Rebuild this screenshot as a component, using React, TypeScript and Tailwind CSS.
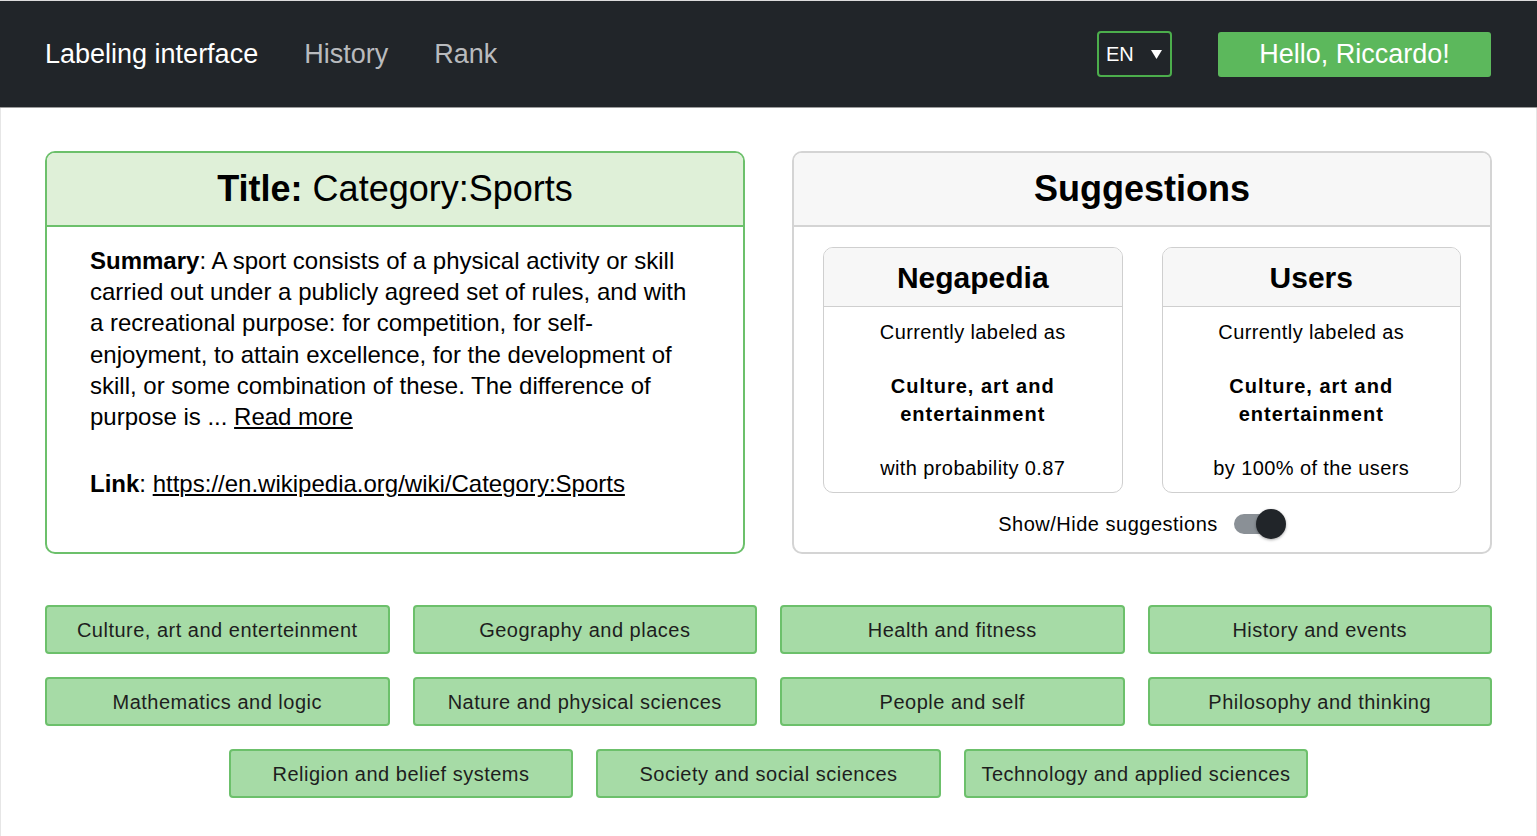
import { useState } from "react";

const CATEGORIES = [
  "Culture, art and enterteinment",
  "Geography and places",
  "Health and fitness",
  "History and events",
  "Mathematics and logic",
  "Nature and physical sciences",
  "People and self",
  "Philosophy and thinking",
  "Religion and belief systems",
  "Society and social sciences",
  "Technology and applied sciences",
];

const FONT = "font-['Liberation_Sans',Arial,sans-serif]";

function SourceCard({ name, footer }: { name: string; footer: string }) {
  return (
    <div className="flex-1 rounded-[10px] border border-[#cfcfcf] bg-white overflow-hidden">
      <div className="h-[59px] flex items-center justify-center bg-[#f7f7f7] border-b border-[#cfcfcf]">
        <h3 className="text-[30px] font-bold text-black">{name}</h3>
      </div>
      <div className="px-4 pt-[11px] pb-[10px] text-center text-[20px] leading-[28px] tracking-[0.4px] text-black">
        <p>Currently labeled as</p>
        <p className="mt-[26px] font-bold tracking-[1px]">
          Culture, art and
          <br />
          entertainment
        </p>
        <p className="mt-[26px]">{footer}</p>
      </div>
    </div>
  );
}

export default function App() {
  const [showSuggestions, setShowSuggestions] = useState(true);

  return (
    <div className={`min-h-screen bg-white border-t border-[#dcdcdc] ${FONT}`}>
      <nav className="h-[107px] bg-[#212529] border-b border-[#9c9c9c] flex items-center pl-[45px] pr-[46px]">
        <div className="flex items-center gap-[46px] text-[27px] pt-[1px]">
          <a href="#" className="text-white">Labeling interface</a>
          <a href="#" className="text-[#b9bbbe]">History</a>
          <a href="#" className="text-[#b9bbbe]">Rank</a>
        </div>
        <div className="ml-auto flex items-center gap-[46px]">
          <button className="w-[75px] h-[46px] rounded-[4px] border-2 border-[#4cae4c] flex items-center justify-between pl-[7px] pr-[8px] text-[20px] text-white">
            <span>EN</span>
            <svg width="11" height="9" viewBox="0 0 11 9">
              <polygon points="0,0 11,0 5.5,9" fill="white" />
            </svg>
          </button>
          <button className="w-[273px] h-[45px] rounded-[3px] bg-[#5cb85c] text-white text-[27px]">
            Hello, Riccardo!
          </button>
        </div>
      </nav>

      <main className="border-x border-[#e6e6e6] px-[44px] pt-[43px] pb-[38px]">
        <div className="flex items-stretch gap-[47px]">
          <section className="flex-1 rounded-[10px] border-2 border-[#6cc06b] overflow-hidden flex flex-col">
            <div className="h-[74px] flex items-center justify-center bg-[#dff0d8] border-b-2 border-[#6cc06b]">
              <h2 className="text-[36px] text-black">
                <span className="font-bold">Title:</span> Category:Sports
              </h2>
            </div>
            <div className="px-[43px] pt-[18px] text-[24px] leading-[1.3] text-black">
              <p>
                <span className="font-bold">Summary</span>: A sport consists of a physical activity or skill
                carried out under a publicly agreed set of rules, and with a recreational purpose: for
                competition, for self-enjoyment, to attain excellence, for the development of skill, or
                some combination of these. The difference of purpose is ...{" "}
                <a href="#" className="underline">Read more</a>
              </p>
              <p className="mt-[36px]">
                <span className="font-bold">Link</span>:{" "}
                <a href="#" className="underline">https://en.wikipedia.org/wiki/Category:Sports</a>
              </p>
            </div>
          </section>

          <section className="flex-1 rounded-[10px] border-2 border-[#d4d4d4] overflow-hidden bg-white">
            <div className="h-[74px] flex items-center justify-center bg-[#f7f7f7] border-b-2 border-[#d4d4d4]">
              <h2 className="text-[36px] font-bold text-black">Suggestions</h2>
            </div>
            <div className="px-[29px] pt-[20px] pb-[13px]">
              <div className="flex gap-[39px]">
                <SourceCard name="Negapedia" footer="with probability 0.87" />
                <SourceCard name="Users" footer="by 100% of the users" />
              </div>
              <div className="mt-[16px] flex items-center justify-center gap-[16px]">
                <span className="text-[20px] tracking-[0.5px] text-black">Show/Hide suggestions</span>
                <button
                  onClick={() => setShowSuggestions((s) => !s)}
                  className="relative w-[52px] h-[30px]"
                  aria-label="Show/Hide suggestions"
                >
                  <span className="absolute left-0 top-[5px] w-[44px] h-[20px] rounded-full bg-[#8a9096]" />
                  <span
                    className={`absolute top-0 w-[30px] h-[30px] rounded-full bg-[#212529] shadow-[0_1px_3px_rgba(0,0,0,0.35)] ${
                      showSuggestions ? "right-0" : "left-0"
                    }`}
                  />
                </button>
              </div>
            </div>
          </section>
        </div>

        <div className="mt-[51px] flex flex-wrap justify-center gap-x-[23px] gap-y-[23px]">
          {CATEGORIES.map((c) => (
            <button
              key={c}
              className="w-[344.5px] h-[49px] rounded-[4px] border-2 border-[#6cc06b] bg-[#a6dba6] text-[20px] tracking-[0.5px] text-[#1e1e1e]"
            >
              {c}
            </button>
          ))}
        </div>
      </main>
    </div>
  );
}
